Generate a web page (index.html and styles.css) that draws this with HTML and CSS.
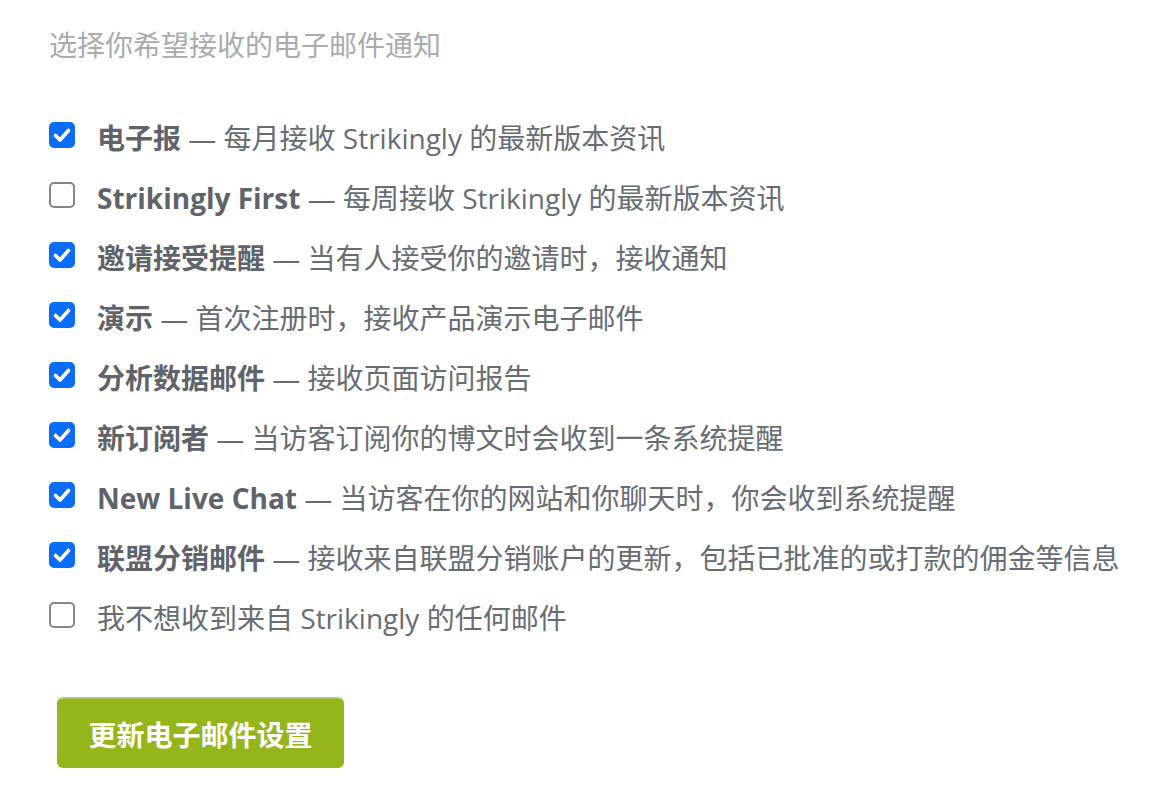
FILE: index.html
```html
<!DOCTYPE html>
<html lang="zh-CN">
<head>
  <meta charset="UTF-8">
  <title>邮件通知设置</title>
  <link rel="stylesheet" href="styles.css">
</head>
<body>
  <div class="settings">
    <p class="intro">选择你希望接收的电子邮件通知</p>

    <ul class="options">
      <li><label><input type="checkbox" checked><span><b>电子报</b> — 每月接收 Strikingly 的最新版本资讯</span></label></li>
      <li><label><input type="checkbox"><span><b>Strikingly First</b> — 每周接收 Strikingly 的最新版本资讯</span></label></li>
      <li><label><input type="checkbox" checked><span><b>邀请接受提醒</b> — 当有人接受你的邀请时，接收通知</span></label></li>
      <li><label><input type="checkbox" checked><span><b>演示</b> — 首次注册时，接收产品演示电子邮件</span></label></li>
      <li><label><input type="checkbox" checked><span><b>分析数据邮件</b> — 接收页面访问报告</span></label></li>
      <li><label><input type="checkbox" checked><span><b>新订阅者</b> — 当访客订阅你的博文时会收到一条系统提醒</span></label></li>
      <li><label><input type="checkbox" checked><span><b>New Live Chat</b> — 当访客在你的网站和你聊天时，你会收到系统提醒</span></label></li>
      <li><label><input type="checkbox" checked><span><b>联盟分销邮件</b> — 接收来自联盟分销账户的更新，包括已批准的或打款的佣金等信息</span></label></li>
      <li><label><input type="checkbox"><span>我不想收到来自 Strikingly 的任何邮件</span></label></li>
    </ul>

    <button class="save-btn">更新电子邮件设置</button>
  </div>
</body>
</html>
```

FILE: styles.css
```css
body {
  margin: 0;
  background: #fff;
  font-family: "Open Sans", "Noto Sans CJK SC", sans-serif;
  color: #686c73;
}

.settings {
  padding: 25px 0 0 49px;
}

.intro {
  margin: 0 0 42px;
  font-size: 28px;
  line-height: 40px;
  color: #a9abad;
}

.options {
  list-style: none;
  margin: 0;
  padding: 0;
}

.options li {
  height: 60px;
  display: flex;
  align-items: center;
}

.options label {
  display: flex;
  align-items: center;
  gap: 22px;
  font-size: 28px;
  white-space: nowrap;
}

.options b {
  font-weight: 700;
  color: #5f636a;
}

.options input {
  appearance: none;
  width: 26px;
  height: 26px;
  margin: 0 0 5px;
  border: 2px solid #858585;
  border-radius: 5px;
  background: #fff;
  flex-shrink: 0;
}

.options input:checked {
  border-color: #0b6cf7;
  background: #0b6cf7 url("data:image/svg+xml,%3Csvg xmlns='http://www.w3.org/2000/svg' viewBox='0 0 22 22'%3E%3Cpath d='M4.5 11.5l4.5 4.5 8.5-9.5' fill='none' stroke='%23fff' stroke-width='3.6' stroke-linecap='round' stroke-linejoin='round'/%3E%3C/svg%3E") center / 22px no-repeat;
}

.save-btn {
  margin: 50px 0 0 8px;
  width: 287px;
  height: 71px;
  border: none;
  border-top: 2px solid #b3cd5c;
  border-radius: 6px;
  background: #95b61b;
  color: #fff;
  font-family: "Open Sans", "Noto Sans CJK SC", sans-serif;
  font-size: 28px;
  font-weight: 700;
  cursor: pointer;
}
```
